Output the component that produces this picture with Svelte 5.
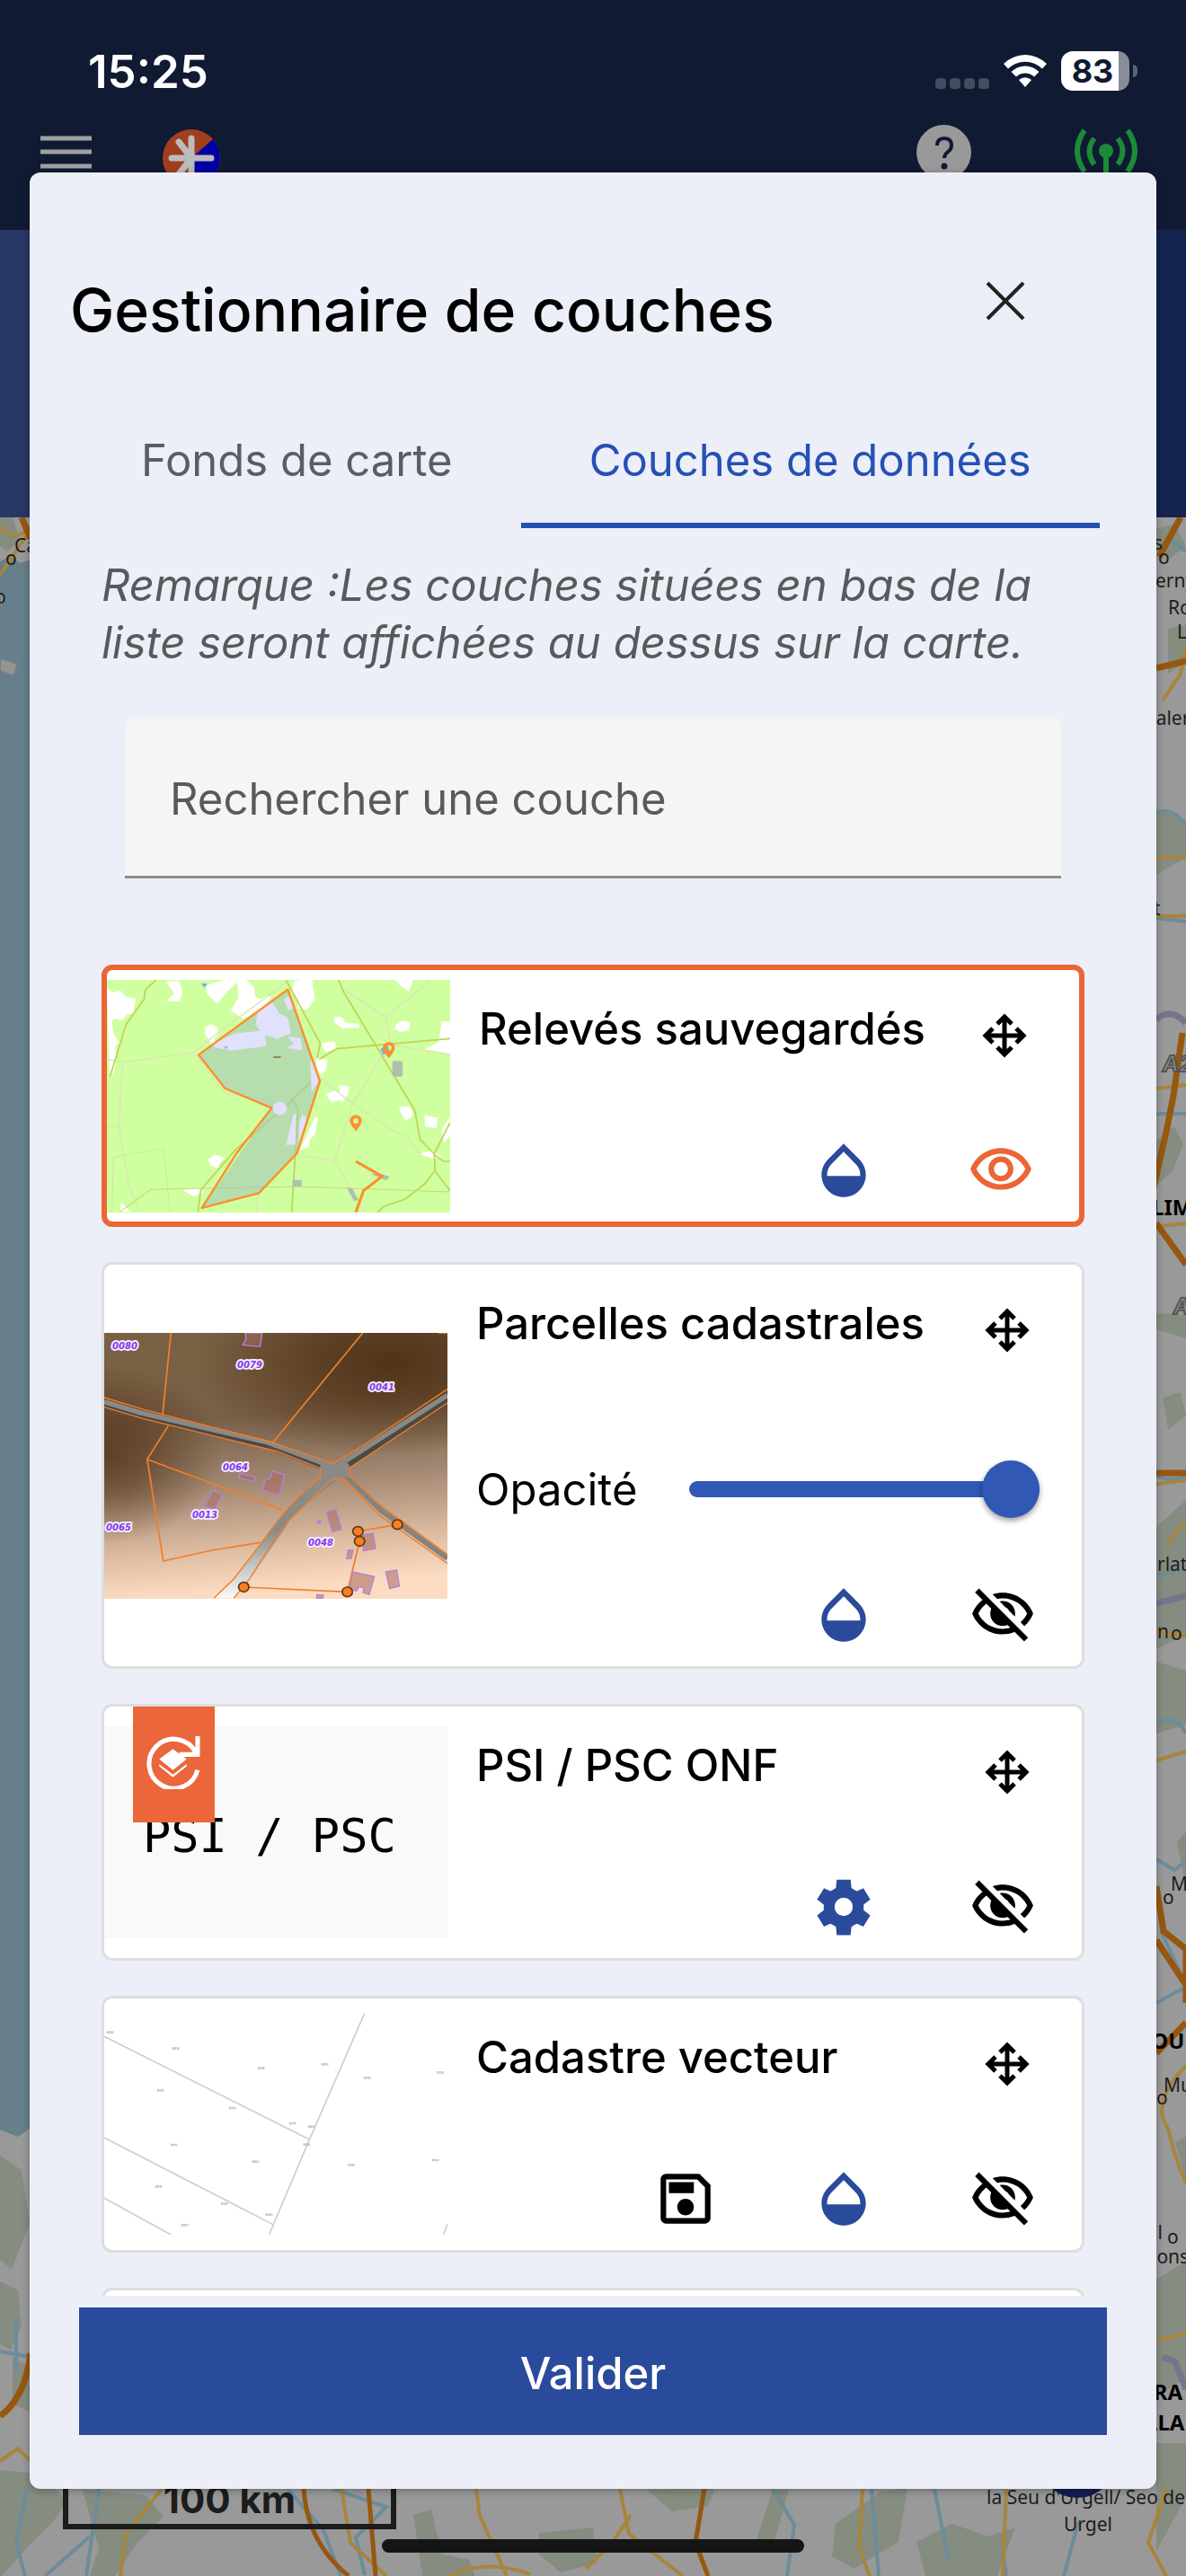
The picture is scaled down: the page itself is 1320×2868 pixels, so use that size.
<script>
  const paths = {
    move: 'M13,11H18L16.5,9.5L17.92,8.08L21.84,12L17.92,15.92L16.5,14.5L18,13H13V18L14.5,16.5L15.92,17.92L12,21.84L8.08,17.92L9.5,16.5L11,18V13H6L7.5,14.5L6.08,15.92L2.16,12L6.08,8.08L7.5,9.5L6,11H11V6L9.5,7.5L8.08,6.08L12,2.16L15.92,6.08L14.5,7.5L13,6V11Z',
    opacity:
      'M17.66 8L12 2.35 6.34 8C4.78 9.56 4 11.64 4 13.64s.78 4.11 2.34 5.67 3.61 2.35 5.66 2.35 4.1-.79 5.66-2.35S20 15.64 20 13.64 19.22 9.56 17.66 8zM6 14c.01-2 .62-3.27 1.76-4.4L12 5.27l4.24 4.38C17.38 10.77 17.99 12 18 14H6z',
    eye: 'M12 6c3.79 0 7.17 2.13 8.82 5.5C19.17 14.87 15.79 17 12 17s-7.17-2.13-8.82-5.5C4.83 8.13 8.21 6 12 6m0-2C7 4 2.73 7.11 1 11.5 2.73 15.89 7 19 12 19s9.27-3.11 11-7.5C21.27 7.11 17 4 12 4zm0 5c1.38 0 2.5 1.12 2.5 2.5S13.38 14 12 14s-2.5-1.12-2.5-2.5S10.62 9 12 9m0-2c-2.48 0-4.5 2.02-4.5 4.5S9.52 16 12 16s4.5-2.02 4.5-4.5S14.48 7 12 7z',
    eyeOff:
      'M12 6c3.79 0 7.17 2.13 8.82 5.5-.59 1.22-1.42 2.27-2.41 3.12l1.41 1.41c1.39-1.23 2.49-2.77 3.18-4.53C21.27 7.11 17 4 12 4c-1.27 0-2.49.2-3.64.57l1.65 1.65C10.66 6.09 11.32 6 12 6zm-1.07 1.14L13 9.21c.57.25 1.03.71 1.28 1.28l2.07 2.07c.08-.34.14-.7.14-1.07C16.5 9.01 14.48 7 12 7c-.37 0-.72.05-1.07.14zM2.01 3.87l2.68 2.68C3.06 7.83 1.77 9.53 1 11.5 2.73 15.89 7 19 12 19c1.52 0 2.98-.29 4.32-.82l3.42 3.42 1.41-1.41L3.42 2.45 2.01 3.87zM6.11 7.97l1.75 1.75c-.23.55-.36 1.15-.36 1.78 0 2.48 2.02 4.5 4.5 4.5.63 0 1.23-.13 1.77-.36l.98.98c-.88.24-1.8.38-2.75.38-3.79 0-7.17-2.13-8.82-5.5.7-1.43 1.72-2.61 2.93-3.53z',
    save: 'M17 3H5C3.89 3 3 3.9 3 5V19C3 20.1 3.89 21 5 21H19C20.1 21 21 20.1 21 19V7L17 3M19 19H5V5H16.17L19 7.83V19M12 12C10.34 12 9 13.34 9 15S10.34 18 12 18 15 16.66 15 15 13.66 12 12 12M6 6H15V10H6V6Z',
    settings:
      'M9.5 2.2h5l.3 3q1 .7 2 1.1l2.3-1 2.5 4-2.4 1.9v2l2.4 1.9-2.5 4-2.3-1q-1 .4-2 1.1l-.3 3h-5l-.3-3q-1-.7-2-1.1l-2.3 1-2.5-4 2.4-1.9v-2L2.4 9.3l2.5-4 2.3 1q1-.4 2-1.1zM12 8.7a3.3 3.3 0 1 0 0 6.6 3.3 3.3 0 0 0 0-6.6z',
  };
  const actionLabels = { save: 'Enregistrer', opacity: 'Opacité', settings: 'Paramètres' };

  let tabs = ['Fonds de carte', 'Couches de données'];
  let activeTab = $state(1);
  let search = $state('');
  let layers = $state([
    { id: 'releves', title: 'Relevés sauvegardés', visible: true, actions: ['opacity'] },
    { id: 'parcelles', title: 'Parcelles cadastrales', visible: false, actions: ['opacity'], opacity: 100 },
    { id: 'psi', title: 'PSI / PSC ONF', visible: false, actions: ['settings'], badge: true },
    { id: 'cadastre', title: 'Cadastre vecteur', visible: false, actions: ['save', 'opacity'] },
  ]);

  const parcels = [
    ['0080', 23, 18],
    ['0079', 162, 39],
    ['0041', 309, 64],
    ['0064', 146, 153],
    ['0013', 112, 206],
    ['0065', 16, 220],
    ['0048', 241, 237],
  ];
  const vertices = [
    [481, 1131],
    [804, 1147],
    [842, 978],
    [837, 945],
    [960, 922],
  ];
  const numbers = [
    [65, 154], [270, 208], [536, 274], [734, 261], [866, 306], [1094, 288], [222, 348], [446, 407], [634, 458],
    [692, 469], [678, 529], [264, 530], [518, 586], [817, 597], [1079, 581], [216, 669], [421, 726], [560, 763], [297, 798],
  ];
  const mapLabels = [
    ['Ca', 16, 615], ['o', 6, 629], ['o', -6, 672], ['s', 1284, 612], ['o', 1289, 628], ['erny', 1286, 654],
    ['Ro', 1300, 684], ['L', 1310, 711], ['valer', 1276, 807], ['t', 1284, 1019], ['rlat-', 1288, 1749],
    ['n', 1288, 1824], ['o', 1303, 1826], ['M', 1303, 2105], ['o', 1294, 2120], ['Mu', 1295, 2329],
    ['o', 1287, 2343], ['il', 1283, 2493], ['o', 1299, 2498], ['ions', 1282, 2520],
    ['Urgel', 1184, 2818],
  ];
  const mapCities = [
    ['LIM', 1282, 1353],
    ['TOUL', 1268, 2281],
    ['RRA L', 1268, 2672],
    ['LLA', 1275, 2706],
  ];
</script>

{#snippet icon(name)}
  <svg class="icon" viewBox="0 0 24 24" aria-hidden="true"><path fill-rule="evenodd" d={paths[name]} /></svg>
{/snippet}

{#snippet thumbReleves()}
  <svg class="thumb" viewBox="0 0 382 259" aria-hidden="true">
    <rect width="382" height="259" fill="#cfff9f" />
    <g transform="scale(0.357 0.3333) translate(-56 -90)" fill="none">
      <g fill="#fff">
        <path d="M56 118l18 14 22-8 20 22 30 6-8 48-22 8-10 18-28-6-6 8 4 40 18 32-12 10 4 46-10 52h-12z" />
        <path d="M365 108l58-18h46l-38 40-30 38-34-30zM462 90h28l26 24 2 32 18 8 22-12 10 8-30 34-56 36-40-28 24-42zM638 96l20-6h38l8 66-26 34-28-4 2-30-18-28zM955 90h56l-14 38-26-18zM240 96l40-4 12 36-8 34-42-2 24-24zM362 248l16-10 22 10 4 24-14 14 6 14-12 4-22-32zM765 212l22 2 14 20 40 2 2 14-52 2-26-20zM956 240l22-14 24 6-4 26-28 6-16-10zM1100 228h26v108l-80-14 44-24zM724 300l44-4 2 26-34 8zM708 350l36 6-4 34-16 18-12-20zM738 470l28-10 18 4-6-22 34 4-4 26-16 26-16-6-20 8zM966 512l36 2 8 28-22 20-14-24zM1046 542l42 8-4 36-36-6zM706 546l8 2-10 60-14 12-6 30-26 8z" />
        <path d="M370 690l22-16 32 10-18 18-2 18-24-10zM290 790l54-4 14 14-32 14zM100 832l30 32H96zM1124 548l-24 40 6 48 20-26zM1026 670l44-10 30 20-24 8z" />
      </g>
      <g stroke="#dde3b6" stroke-width="4">
        <path d="M56 355l50 10 220-32 75-65 215-170M105 366l-12 210 30 196 34 94M330 335l95 135 130 20 45 60-20 80-50 90-8 146M56 578h36M800 125l125 90 135-120M925 215l15 90 186 36M935 305l-115 205-55 184-200-32M765 694l95 170M725 420l80 70 130 95 60 30 40 60" />
        <path d="M72 866l4-184 156-30 22 214" stroke="#cbe8a0" stroke-width="3" />
      </g>
      <g stroke="#bfd455" stroke-width="5">
        <path d="M210 90l-34 32-4 32-56 84-50 174M615 92l106 210-10 50M778 90l16 40 222 396 16 96 45 50 2 56 47 66M718 355l54-35 354-34M340 866l8-74 110-136 160-148 84-88-8-60M628 484l24 36-20 346M1078 728l-32 44-60 50-66 24-20 20M1126 566l-50 106 28 24h22" />
        <path d="M95 866l98-76 460-10 473 18" stroke="#c8d878" stroke-width="3" />
      </g>
      <path d="M620 122l100 306-72 242-118 132-178 50 218-334-146-66-82-112z" fill="#a5c7b7" fill-opacity=".6" />
      <g fill="#e1e1fc">
        <path d="M385 305l68-36 94-10 6 52-110 15-50-10zM526 192l46-26 22 36 26 14 10 52-44 20-48-20-18-28zM608 156l14-12 16 40-16 8zM620 280l40 4 6 40-50-6 22-14zM690 360l14 4 12 66-22 34zM638 538l8-4-2 106-30 2zM655 570l10-30 14 10-24 100z" />
        <circle cx="595" cy="519" r="22" />
      </g>
      <path d="M350 102h20l-10 14zM420 313h14l-6 8zM908 322l22-18 6 20-18 18z" fill="#77b3e8" />
      <g fill="#afbfb0">
        <rect x="946" y="361" width="32" height="52" rx="6" />
        <path d="M635 758h28v22h-28zM804 784l18 4 18 38-14 2zM878 738h34l26 10-12 12z" />
      </g>
      <path d="M574 345h26l-4 6h-20z" fill="#948a50" />
      <g stroke="#ff8e2e" stroke-width="7" stroke-linejoin="round">
        <path d="M620 122l100 306-72 242-118 132-178 50 110-186 108-148-146-66-82-112z" />
        <path d="M832 696l82 50-58 48-24 72" stroke-width="9" />
      </g>
      {#each [[935, 318], [832, 562]] as [x, y]}
        <path d="M{x - 19} {y}a19 21 0 1 1 38 0q-3 14-19 33q-16-19-19-33zM{x - 8} {y - 1}a8 9 0 1 0 16 0a8 9 0 1 0-16 0z" fill="#ff8e2e" fill-rule="evenodd" />
      {/each}
    </g>
  </svg>
{/snippet}

{#snippet thumbParcelles()}
  <svg class="thumb" viewBox="0 0 382 296" aria-hidden="true">
    <defs>
      <linearGradient id="ground" x1="0" y1="0" x2="0.1" y2="1">
        <stop offset="0" stop-color="#7a6043" />
        <stop offset="0.35" stop-color="#795f46" />
        <stop offset="0.6" stop-color="#a28772" />
        <stop offset="0.85" stop-color="#dfbea3" />
        <stop offset="1" stop-color="#fbdcc2" />
      </linearGradient>
      <radialGradient id="shade">
        <stop offset="0" stop-color="#50341a" />
        <stop offset="0.4" stop-color="#50341a" stop-opacity="0.7" />
        <stop offset="1" stop-color="#50341a" stop-opacity="0" />
      </radialGradient>
      <linearGradient id="road" x1="0" y1="0" x2="0" y2="1"><stop offset="0.5" stop-color="#8a8a86" /><stop offset="1" stop-color="#fbfcfa" /></linearGradient>
    </defs>
    <rect width="382" height="296" fill="url(#ground)" />
    <ellipse cx="320" cy="32" rx="220" ry="105" fill="url(#shade)" />
    <ellipse cx="0" cy="135" rx="130" ry="100" fill="url(#shade)" fill-opacity=".8" />
    <g transform="scale(0.357 0.3333) translate(-46 -282)" fill="none">
      <path d="M46 520l110 36 400 100 200 84M1116 500L770 745" stroke="#4c4a45" stroke-width="24" />
      <path d="M46 512l110 36 400 100 210 84L1116 490" stroke="#8b8985" stroke-width="16" />
      <path d="M790 750l120 125 206 160" stroke="#86827c" stroke-width="18" />
      <path d="M720 718h88l8 40-40 12-90 74-60 62-124 200-52 62h-60l76-86 92-130 80-110 80-72z" fill="url(#road)" />
      <g stroke="#f07e2a" stroke-width="5">
        <path d="M46 498l124 40 400 110 190 70 90-58 266-190M46 530l120 38 420 110 134 56v30l-50 46-70 80-80 116-70 98-62 64M450 1168l50-66 80-134 38-56 76-78 60-62q22-12 46 6l100 110 216 164M1116 516L812 732v28l90 94 214 168" stroke-width="4" />
        <path d="M254 282l-26 274M852 282L570 650M246 592l-66 112 50 340 152-36 150-26M180 704l424 170M1088 282h28M481 1131l323 16 38-169-5-33 123-23" />
      </g>
      <g stroke="#b283d9" stroke-width="4" fill="#a96a5e" fill-opacity=".55">
        <path d="M486 282l2 20-10 20 54 6 6-46zM570 744l38 12-16 68-52-16 8-34 16-6zM470 750l48 14-6 16-46-14zM384 808l30 14-22 50-32-12zM738 880l30-8 18 66-28 8zM850 956l34-4 8 50-38 8zM806 1008h16l-6 28h-14zM820 1080l68 16-16 60-18-6v-18l-14-2-8 14-20-8zM924 1080l34-6 8 54-30 8zM710 1156l20 2-4 12h-18z" />
      </g>
      <circle cx="716" cy="913" r="7" fill="#b283d9" />
      {#each vertices as [x, y]}
        <circle cx={x} cy={y} r="16" fill="#ff7d1f" stroke="#5b3a1c" stroke-width="5" />
      {/each}
    </g>
    {#each parcels as [label, x, y]}
      <text class="parcel" {x} {y}>{label}</text>
    {/each}
  </svg>
{/snippet}

{#snippet thumbPsi()}
  <div class="thumb psi">PSI / PSC</div>
{/snippet}

{#snippet thumbCadastre()}
  <svg class="thumb" viewBox="0 0 382 246" aria-hidden="true">
    <g transform="scale(0.357 0.3333) translate(-46 -92)" fill="none" stroke="#cfcfcf" stroke-width="5">
      <path d="M857 92L686 512 560 830M46 168l640 344M46 506l526 290M46 708l208 122M1116 794l-12 36" />
      {#each numbers as [x, y]}
        <path d="M{x - 11} {y}h22" stroke="#bdbdbd" stroke-width="8" stroke-dasharray="5 2" />
      {/each}
    </g>
  </svg>
{/snippet}

<main class="screen">
  <div class="backdrop">
    <header>
      <div class="status">
        <span class="clock">15:25</span>
        <svg class="cell" viewBox="0 0 60 44" aria-hidden="true">
          {#each [0, 16, 32, 48] as x}
            <rect {x} y="30" width="12" height="12" rx="4" fill="#454c60" />
          {/each}
        </svg>
        <svg class="wifi" viewBox="0 0 50 44" aria-hidden="true">
          <path d="M1 14a34 34 0 0 1 48 0l-5 5.500a27 27 0 0 0-38 0zM9.500 23a22 22 0 0 1 31 0l-5.500 5.500a14.500 14.500 0 0 0-20 0zM18 32a10.500 10.500 0 0 1 14 0l-7 8z" fill="#fff" />
        </svg>
        <div class="battery">83</div>
      </div>
      <div class="appbar">
        <svg class="burger" viewBox="0 0 57 61" aria-hidden="true"><path d="M0 15h57M0 30h57M0 46h57" stroke="#a0a0a2" stroke-width="5" /></svg>
        <svg class="logo" viewBox="0 0 64 70" aria-hidden="true">
          <circle cx="32" cy="37" r="32" fill="#a03f1d" />
          <path d="M56 16A32 32 0 0 1 32 69V37z" fill="#0000a0" />
          <path d="M32 15v44M10 37h44M18 19l14 18-14 18" stroke="#bcbcbc" stroke-width="7" stroke-linecap="round" fill="none" />
        </svg>
        <svg class="help" viewBox="0 0 61 61" aria-hidden="true">
          <circle cx="30.500" cy="30.500" r="30.500" fill="#999" />
          <path d="M23 23q0-8 8-8t8 8q0 4-4 7t-4 7" stroke="#101a33" stroke-width="4" fill="none" />
          <circle cx="31" cy="46" r="3.500" fill="#101a33" />
        </svg>
        <svg class="antenna" viewBox="0 0 70 61" aria-hidden="true">
          <circle cx="35" cy="29" r="8" fill="#1d8a36" />
          <path d="M35 32v29M22 15q-11 14 0 29M48 15q11 14 0 29M11 6q-16 23 0 46M59 6q16 23 0 46" stroke="#1d8a36" stroke-width="6" fill="none" />
        </svg>
      </div>
    </header>
    <div class="band"></div>
    <svg class="map" viewBox="0 576 1320 2292" preserveAspectRatio="xMidYMid slice" aria-hidden="true">
      <rect y="576" width="1320" height="2292" fill="#999" />
      <path d="M0 625l12-6 10 8 12-4v1746l-14 10-20-8z" fill="#667f8a" />
      <path d="M0 733l20 6-5 14-15-6zM0 660l6 4-6 16z" fill="#939591" stroke="#6d7f88" stroke-width="2" />
      <g fill="#858c80">
        <path d="M0 576h14l8 26-14 12-8-6zM1287 588l20-4 13 24-18 14-15-6zM1300 700l20-4v40l-20 14zM1287 900l33 14v40l-33 20zM1287 1270l20-16 10 20-12 30-18 16zM1287 1462l33 2v26l-33-10zM1294 1556l20-6 6 26-20 16zM1287 1700l33-30v150l-33 16zM1287 1850l33 10v60l-33 10zM1310 2050l10-10v60zM1308 2385l12-6v50zM1287 2538l33-20v130l-33 20zM1287 2720h33v60l-33 60z" />
        <path d="M0 2400l24 16 9 60-20 50-13-10zM0 2540l20 10 4 40-12 26-12-6zM14 2625l19 10v50l-19-8zM0 2750l40 4 36 30-16 22-24 24-36 40zM92 2772l70 6 20 24-30 30-44 66H90l20-60zM460 2800l20-6 12 50 30 6 10 28h-60zM600 2820l60-6 4 40-40 10-24-20zM720 2772l76-2-8 20-40 6zM860 2772h18l-20 70-18-8zM930 2810l50-36 30-4-10 60-50 30-24-14zM1020 2830l40-20 40 14 30-10-20 54h-80z" />
      </g>
      <g fill="none" stroke="#6b8c9b" stroke-width="4">
        <path d="M1290 610l14-8 16 12M1287 905q14-8 33 12M1287 1022l33 4M1287 1240h33M1287 1644q16 6 33 0M1287 1755l33-10M1287 1920q20-14 33 10M1287 2070l20 12 13-10M1287 2230l33-18M1292 2150l28 60M0 2618l34 6M18 2580v60M110 2771l-14 97M30 2771l-12 60 10 37M320 2771l40 46 34 90M370 2771l60 20-34 34 10 42M860 2771l24 40-8 57M970 2771l8 97M1040 2771l16 80M50 2868l50-44" />
        <path d="M1184 2868l16-60M1120 2868l-4-30" />
      </g>
      <g fill="none" stroke="#a8853c" stroke-width="4">
        <path d="M0 586q18 20 34 0M0 640l34-50M1287 742l33-6M1294 780l20-30 6-30M1287 955h33M1287 1020h33M1287 1212l33-4M1287 1366l33-4M1287 1652l33-4M1300 1720q16-26 20-24M1287 1816l33 6M1287 1960l33-10M1320 2300q-40 40-20 70 10 40 20 60M1287 2606l33-8M0 2740l20-14 14 14M180 2771l-40 50-6 47M530 2771l4 30 30 67M690 2771l10 50 60 47M702 2800l-20 30-30 30M960 2771l-4 66 12 31M1120 2771l-4 97M1298 2771l-20 60 20 37M380 2771l10 60 40 37M500 2868q40-20 90-2" />
      </g>
      <g fill="none" stroke="#97570e" stroke-width="7">
        <path d="M24 576l10 24M1290 620l24-44M1287 744l33-8M1316 1150l-10 70-8 40-14 62M1287 1362l33 46M1287 1640h33M1287 2100l8 50 25 20v60M1287 2286l33-34M1320 2210l-33-50M0 2690q28-20 34-70" />
        <path d="M338 2771q4 60 50 97M410 2771l8 97M784 2771l-10 60 14 37" stroke-width="5" />
      </g>
      <path d="M1287 1135q16-14 33 4M1287 1785l33-8M1294 2624l14 6 12 30" stroke="#77748e" stroke-width="7" fill="none" />
      <g class="place">
        {#each mapLabels as [label, x, y]}
          <text {x} {y}>{label}</text>
        {/each}
        <text x="1098" y="2788">la Seu d'Urgell/ Seo de</text>
      </g>
      <g class="city">
        {#each mapCities as [label, x, y]}
          <text {x} {y}>{label}</text>
        {/each}
      </g>
      <g class="road">
        <text x="1294" y="1193">A20</text>
        <text x="1306" y="1463">A</text>
      </g>
      <circle cx="1199" cy="2737" r="44" fill="#141d52" />
    </svg>
    <div class="scale">100 km</div>
    <div class="home"></div>
  </div>

  <div class="overlay">
    <div class="dialog" role="dialog" aria-labelledby="dialog-title">
      <div class="heading">
        <h1 id="dialog-title">Gestionnaire de couches</h1>
        <button class="close" aria-label="Fermer">
          <svg viewBox="0 0 60 60" aria-hidden="true"><path d="M10 10l40 40M50 10L10 50" stroke="#222" stroke-width="4" /></svg>
        </button>
      </div>
      <div class="tabs" role="tablist">
        {#each tabs as tab, i}
          <button role="tab" class:active={activeTab === i} aria-selected={activeTab === i} onclick={() => (activeTab = i)}>
            {tab}
          </button>
        {/each}
      </div>
      <p class="note">Remarque :Les couches situées en bas de la liste seront affichées au dessus sur la carte.</p>
      <input class="search" type="text" placeholder="Rechercher une couche" aria-label="Rechercher une couche" bind:value={search} />

      <ul class="layers">
        {#each layers as layer (layer.id)}
          <li class="card" class:selected={layer.visible}>
            {#if layer.id === 'releves'}
              {@render thumbReleves()}
            {:else if layer.id === 'parcelles'}
              {@render thumbParcelles()}
            {:else if layer.id === 'psi'}
              {@render thumbPsi()}
            {:else}
              {@render thumbCadastre()}
            {/if}
            {#if layer.badge}
              <div class="badge">
                <svg viewBox="0 0 60 60" aria-hidden="true">
                  <path d="M56 39A27 27 0 1 1 54 20M56 2v20H36" stroke="#fff" stroke-width="5" fill="none" />
                  <path d="M29 16l15 11-15 12-15-12zM14 35l15 12 15-12v-2.500L29 44 14 32.500z" fill="#fff" />
                </svg>
              </div>
            {/if}
            <div class="body">
              <div class="top">
                <h2>{layer.title}</h2>
                <button class="drag" aria-label="Déplacer">{@render icon('move')}</button>
              </div>
              {#if layer.opacity !== undefined}
                <div class="slider">
                  <label for="opacity-{layer.id}">Opacité</label>
                  <input id="opacity-{layer.id}" type="range" min="0" max="100" bind:value={layer.opacity} />
                </div>
              {/if}
              <div class="actions">
                {#each layer.actions as action}
                  <button class={action} aria-label={actionLabels[action]}>{@render icon(action)}</button>
                {/each}
                <button class="toggle" aria-label="Visibilité" aria-pressed={layer.visible} onclick={() => (layer.visible = !layer.visible)}>
                  {@render icon(layer.visible ? 'eye' : 'eyeOff')}
                </button>
              </div>
            </div>
          </li>
        {/each}
        <li class="card blank"></li>
      </ul>
      <button class="submit">Valider</button>
    </div>
  </div>
</main>

<style>
  :global(body) {
    margin: 0;
  }
  .screen {
    position: relative;
    height: 100vh;
    overflow: hidden;
    font-family: Inter, 'Liberation Sans', sans-serif;
    font-size: 49px;
    color: #000;
  }
  .screen * {
    box-sizing: border-box;
  }
  svg {
    display: block;
    flex-shrink: 0;
  }
  button {
    border: 0;
    padding: 0;
    background: none;
    font: inherit;
    color: inherit;
    cursor: pointer;
  }

  /* dimmed app behind the dialog */
  .backdrop {
    position: absolute;
    inset: 0;
    display: flex;
    flex-direction: column;
  }
  header {
    height: 256px;
    padding: 57px 54px 0 45px;
    background: #101a33;
  }
  .status {
    display: flex;
    align-items: center;
    gap: 15px;
    height: 44px;
    padding-left: 53px;
  }
  .clock {
    margin-right: auto;
    font-size: 51px;
    font-weight: 600;
    color: #fff;
  }
  .cell {
    width: 60px;
    height: 44px;
  }
  .wifi {
    width: 50px;
    height: 44px;
  }
  .battery {
    position: relative;
    width: 76px;
    height: 44px;
    margin-right: 9px;
    padding-right: 6px;
    border-radius: 13px;
    background: linear-gradient(to right, #fff 84%, #888d99 84%);
    color: #101a33;
    font-size: 36px;
    font-weight: 700;
    line-height: 44px;
    text-align: center;
  }
  .battery::after {
    content: '';
    position: absolute;
    right: -9px;
    top: 15px;
    width: 5px;
    height: 14px;
    border-radius: 0 5px 5px 0;
    background: #5b6274;
  }
  .appbar {
    display: flex;
    align-items: flex-start;
    margin-top: 38px;
  }
  .burger {
    width: 57px;
    height: 61px;
  }
  .logo {
    width: 64px;
    height: 70px;
    margin: 0 auto 0 79px;
  }
  .help {
    width: 61px;
    height: 61px;
  }
  .antenna {
    width: 70px;
    height: 61px;
    margin-left: 115px;
  }
  .band {
    height: 320px;
    background: linear-gradient(to right, #283765, #14244f);
  }
  .map {
    flex: 1;
    width: 100%;
    min-height: 0;
  }
  .place {
    font-family: 'Noto Sans', sans-serif;
    font-size: 21px;
    fill: #1c1c1c;
  }
  .city {
    font-family: 'Noto Sans', sans-serif;
    font-size: 24px;
    font-weight: 700;
    fill: #000;
  }
  .road {
    font-size: 24px;
    font-weight: 700;
    font-style: italic;
    fill: #8f8f8f;
    stroke: #555;
    stroke-width: 2px;
  }
  .scale {
    position: absolute;
    left: 70px;
    bottom: 52px;
    width: 371px;
    height: 64px;
    border: 6px solid #1c1c1c;
    border-top: 0;
    color: #1c1c1c;
    font-size: 42px;
    font-weight: 700;
    line-height: 62px;
    text-align: center;
  }
  .home {
    position: absolute;
    left: 50%;
    bottom: 26px;
    width: 470px;
    height: 15px;
    margin-left: -235px;
    border-radius: 8px;
    background: #151515;
  }

  .overlay {
    position: absolute;
    inset: 0;
    padding: 192px 33px 97px;
  }
  .dialog {
    display: flex;
    flex-direction: column;
    height: 100%;
    padding-bottom: 60px;
    border-radius: 12px;
    background: #eceff8;
    box-shadow: 0 2px 8px rgba(0, 0, 0, 0.3);
  }
  .heading {
    display: flex;
    align-items: flex-start;
    justify-content: space-between;
    padding: 113px 138px 0 45px;
  }
  h1 {
    margin: 0;
    font-size: 66px;
    font-weight: 500;
    line-height: 80px;
  }
  .close {
    width: 60px;
    height: 60px;
  }
  .tabs {
    display: flex;
    margin: 51px 48px 0;
  }
  .tabs button {
    height: 152px;
    padding: 6px 76px 0;
    border-bottom: 6px solid transparent;
    color: #5c5d60;
  }
  .tabs .active {
    border-color: #2650b4;
    color: #2650b4;
  }
  .note {
    margin: 32px 80px 0;
    color: #58595b;
    font-style: italic;
    line-height: 64px;
  }
  .search {
    flex-shrink: 0;
    height: 180px;
    margin: 50px 106px 0;
    padding: 6px 50px 0;
    border: 0;
    border-bottom: 3px solid #8c8c8c;
    border-radius: 12px 12px 0 0;
    background: #f5f5f5;
    font: inherit;
    color: #000;
  }
  .search::placeholder {
    color: #5a5a5a;
    opacity: 1;
  }
  .layers {
    flex: 1;
    display: flex;
    flex-direction: column;
    gap: 39px;
    min-height: 0;
    margin: 96px 80px 0;
    padding: 0;
    overflow: hidden;
    list-style: none;
  }
  .card {
    position: relative;
    flex-shrink: 0;
    display: flex;
    align-items: center;
    border: 3px solid #dedede;
    border-radius: 12px;
    background: #fff;
  }
  .card.selected {
    border: 6px solid #eb6535;
  }
  .blank {
    min-height: 286px;
  }
  .thumb {
    flex-shrink: 0;
    width: 382px;
  }
  .psi {
    height: 236px;
    padding-left: 43px;
    background: #f9f9f9;
    font-family: 'DejaVu Sans Mono', monospace;
    font-size: 52px;
    line-height: 244px;
  }
  .parcel {
    font-family: 'DejaVu Sans', sans-serif;
    font-size: 10px;
    font-weight: 700;
    font-style: italic;
    text-anchor: middle;
    fill: #8338ec;
    stroke: #f4ecff;
    stroke-width: 4px;
    stroke-linejoin: round;
    paint-order: stroke;
  }
  .badge {
    position: absolute;
    left: 32px;
    top: 0;
    width: 91px;
    height: 129px;
    padding: 31px 15px;
    background: #eb663a;
  }
  .body {
    flex: 1;
    min-width: 0;
    padding: 36px 0 20px;
  }
  .top {
    display: flex;
    justify-content: space-between;
    height: 67px;
    padding: 0 53px 0 32px;
  }
  h2 {
    margin: 0;
    font-size: 49px;
    font-weight: 500;
    line-height: 60px;
    white-space: nowrap;
  }
  .drag {
    align-self: flex-end;
    width: 60px;
    height: 60px;
  }
  .slider {
    display: flex;
    align-items: center;
    gap: 58px;
    height: 40px;
    margin-top: 127px;
    padding: 0 47px 0 32px;
  }
  .slider input {
    flex: 1;
    min-width: 0;
    height: 64px;
    margin: 0;
    appearance: none;
    background: none;
  }
  .slider input::-webkit-slider-runnable-track {
    height: 18px;
    border-radius: 9px;
    background: #3058b4;
  }
  .slider input::-webkit-slider-thumb {
    appearance: none;
    width: 64px;
    height: 64px;
    margin-top: -23px;
    border-radius: 50%;
    background: #3058b4;
    box-shadow: 0 3px 6px rgba(0, 0, 0, 0.4);
  }
  .actions {
    display: flex;
    justify-content: flex-end;
    margin-top: 83px;
  }
  .actions button {
    display: flex;
    justify-content: center;
    width: 25%;
    height: 74px;
  }
  .actions .icon {
    width: 74px;
    height: 74px;
  }
  .icon {
    fill: currentColor;
  }
  .opacity,
  .settings {
    color: #2a4b9b;
  }
  .selected .toggle {
    color: #eb6535;
  }
  .submit {
    flex-shrink: 0;
    height: 142px;
    margin: 13px 55px 0;
    padding-top: 4px;
    background: #2a4b9b;
    color: #fff;
    font-weight: 500;
  }
</style>
